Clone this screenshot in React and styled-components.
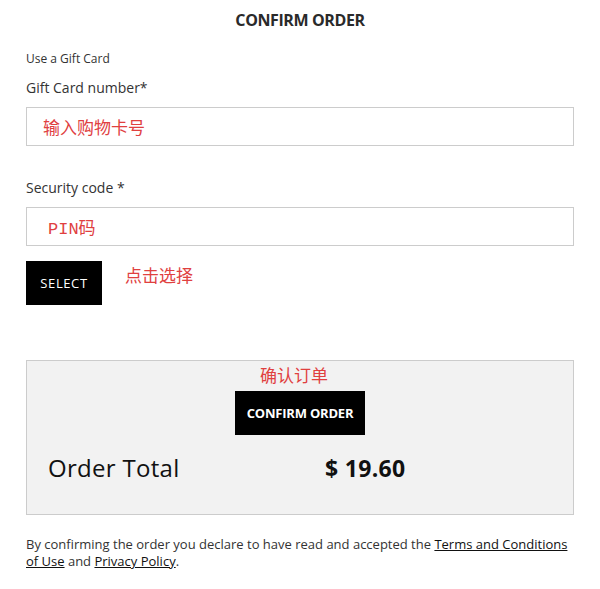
import React from "react";
import styled, { createGlobalStyle } from "styled-components";

const Global = createGlobalStyle`
  body {
    margin: 0;
    background: #fff;
    font-family: "Open Sans", "Noto Sans CJK SC", sans-serif;
    color: #333;
  }
`;

const Page = styled.div`
  width: 548px;
  padding: 0 26px;
  display: flex;
  flex-direction: column;
`;

const Title = styled.h1`
  margin: 10px 0 0;
  text-align: center;
  font-size: 16px;
  font-weight: 700;
  letter-spacing: -0.4px;
  color: #2a2a2a;
  line-height: 20px;
`;

const Small = styled.div`
  margin-top: 21px;
  font-size: 12px;
  line-height: 16px;
`;

const Label = styled.div`
  margin-top: ${p => p.$top || 12}px;
  font-size: 14px;
  line-height: 18px;
`;

const Field = styled.div`
  margin-top: 10px;
  height: 37px;
  border: 1px solid #ccc;
  display: flex;
  align-items: center;
  padding-left: ${p => p.$pad || 16}px;
`;

const Note = styled.span`
  color: #e0403f;
  font-size: ${p => p.$size || 17}px;
  font-family: ${p => (p.$mono ? '"Liberation Mono", "Noto Sans CJK SC", monospace' : '"Noto Sans CJK SC", sans-serif')};
`;

const SelectRow = styled.div`
  margin-top: 15px;
  display: flex;
  align-items: flex-start;
  gap: 23px;
`;

const BlackButton = styled.button`
  background: #000;
  color: #fff;
  border: none;
  height: 44px;
  width: ${p => p.$w}px;
  font-family: "Open Sans", sans-serif;
  font-size: 13px;
  font-weight: ${p => (p.$bold ? 700 : 400)};
  letter-spacing: ${p => (p.$bold ? "-0.2px" : "0.6px")};
  padding: 0;
`;

const TotalBox = styled.div`
  margin-top: 55px;
  background: #f2f2f2;
  border: 1px solid #ccc;
  height: 153px;
  display: flex;
  flex-direction: column;
  align-items: center;
`;

const TotalRow = styled.div`
  margin-top: 16px;
  width: 100%;
  display: flex;
  align-items: center;
  padding-left: 21px;
  box-sizing: border-box;
`;

const TotalLabel = styled.div`
  width: 277px;
  font-size: 24px;
  letter-spacing: 0.3px;
  color: #111;
`;

const TotalValue = styled.div`
  font-size: 23px;
  font-weight: 700;
  letter-spacing: 0.3px;
  color: #111;
`;

const Legal = styled.p`
  margin: 21px 0 0;
  font-size: 13px;
  line-height: 17px;
  color: #333;
  a {
    color: #111;
    text-decoration: underline;
  }
`;

export default function App() {
  return (
    <>
      <Global />
      <Page>
        <Title>CONFIRM ORDER</Title>
        <Small>Use a Gift Card</Small>
        <Label $top={12}>Gift Card number*</Label>
        <Field>
          <Note>输入购物卡号</Note>
        </Field>
        <Label $top={33}>Security code *</Label>
        <Field $pad={21}>
          <Note $mono>PIN码</Note>
        </Field>
        <SelectRow>
          <BlackButton $w={76}>SELECT</BlackButton>
          <Note style={{ marginTop: 1 }}>点击选择</Note>
        </SelectRow>
        <TotalBox>
          <Note style={{ marginTop: 1, marginLeft: -12 }}>确认订单</Note>
          <BlackButton $w={130} $bold style={{ marginTop: 4 }}>
            CONFIRM ORDER
          </BlackButton>
          <TotalRow>
            <TotalLabel>Order Total</TotalLabel>
            <TotalValue>$ 19.60</TotalValue>
          </TotalRow>
        </TotalBox>
        <Legal>
          By confirming the order you declare to have read and accepted the{" "}
          <a>Terms and Conditions</a> <a>of Use</a> and <a>Privacy Policy</a>.
        </Legal>
      </Page>
    </>
  );
}
